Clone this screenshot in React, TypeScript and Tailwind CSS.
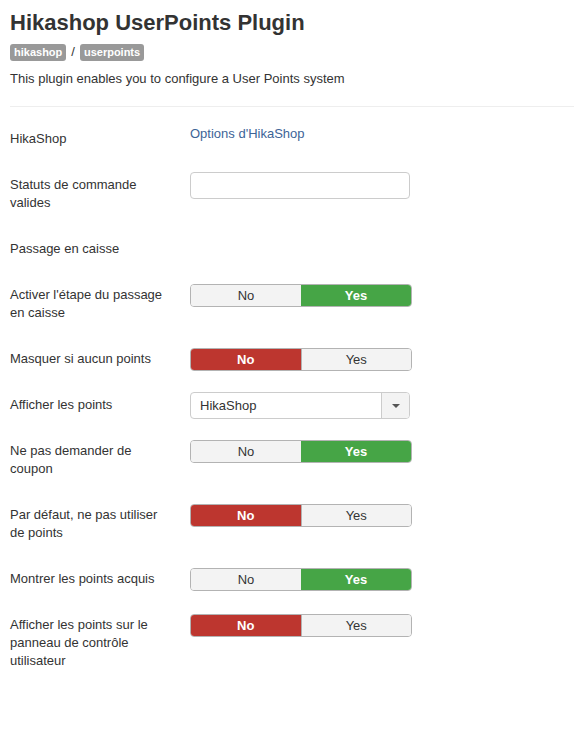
import React from 'react';

type Row =
  | { kind: 'link'; label: string; text: string }
  | { kind: 'input'; label: string }
  | { kind: 'none'; label: string }
  | { kind: 'toggle'; label: string; value: 'yes' | 'no' }
  | { kind: 'select'; label: string; value: string };

const rows: Row[] = [
  { kind: 'link', label: 'HikaShop', text: "Options d'HikaShop" },
  { kind: 'input', label: 'Statuts de commande valides' },
  { kind: 'none', label: 'Passage en caisse' },
  { kind: 'toggle', label: "Activer l'étape du passage en caisse", value: 'yes' },
  { kind: 'toggle', label: 'Masquer si aucun points', value: 'no' },
  { kind: 'select', label: 'Afficher les points', value: 'HikaShop' },
  { kind: 'toggle', label: 'Ne pas demander de coupon', value: 'yes' },
  { kind: 'toggle', label: 'Par défaut, ne pas utiliser de points', value: 'no' },
  { kind: 'toggle', label: 'Montrer les points acquis', value: 'yes' },
  { kind: 'toggle', label: 'Afficher les points sur le panneau de contrôle utilisateur', value: 'no' },
];

function Toggle({ value }: { value: 'yes' | 'no' }) {
  const isNo = value === 'no';
  return (
    <div className="mt-[3px] flex w-[222px] h-[23px] rounded-[4px] overflow-hidden border border-[#b3b3b3]">
      <div
        className={
          isNo
            ? 'flex-1 flex items-center justify-center bg-[#bd362f] text-white font-bold'
            : 'flex-1 flex items-center justify-center bg-[#f3f3f3] text-[#333]'
        }
      >
        No
      </div>
      <div
        className={
          isNo
            ? 'flex-1 flex items-center justify-center bg-[#f3f3f3] text-[#333] border-l border-[#b3b3b3]'
            : 'flex-1 flex items-center justify-center bg-[#46a546] text-white font-bold'
        }
      >
        Yes
      </div>
    </div>
  );
}

function Control({ row }: { row: Row }) {
  switch (row.kind) {
    case 'link':
      return <a className="text-[#3d6497] leading-[18px]">{row.text}</a>;
    case 'input':
      return <div className="mt-px w-[220px] h-[27px] rounded-[4px] border border-[#ccc] bg-white" />;
    case 'toggle':
      return <Toggle value={row.value} />;
    case 'select':
      return (
        <div className="mt-px flex w-[220px] h-[27px] rounded-[4px] border border-[#ccc] bg-white overflow-hidden">
          <div className="flex-1 flex items-center pl-[9px] text-[#333]">{row.value}</div>
          <div className="w-[28px] flex items-center justify-center bg-[#f3f3f3] border-l border-[#ccc]">
            <svg width="8" height="4" viewBox="0 0 8 4">
              <path d="M0 0 L8 0 L4 4 Z" fill="#555" />
            </svg>
          </div>
        </div>
      );
    default:
      return null;
  }
}

export default function App() {
  return (
    <div className="min-h-[730px] bg-white px-[10px] text-[13px] leading-[18px] text-[#333] font-['Liberation_Sans',Arial,sans-serif]">
      {/* Header */}
      <h1 className="pt-[9px] text-[22px] leading-[27px] font-bold text-[#333]">Hikashop UserPoints Plugin</h1>
      <div className="mt-[7px] flex items-center gap-[5px]">
        <span className="rounded-[3px] bg-[#999] px-[4px] text-[11px] leading-[17px] font-bold text-white">hikashop</span>
        <span className="text-[#333]">/</span>
        <span className="rounded-[3px] bg-[#999] px-[4px] text-[11px] leading-[17px] font-bold text-white">userpoints</span>
      </div>
      <p className="mt-[9px]">This plugin enables you to configure a User Points system</p>
      <hr className="mt-[18px] mr-[-10px] border-0 border-t border-[#eee]" />

      {/* Settings */}
      <div className="mt-[18px]">
        {rows.map((row, i) => (
          <div key={i} className="flex mb-[18px]">
            <label className="w-[160px] mr-[20px] py-[5px]">{row.label}</label>
            <div>
              <Control row={row} />
            </div>
          </div>
        ))}
      </div>
    </div>
  );
}
